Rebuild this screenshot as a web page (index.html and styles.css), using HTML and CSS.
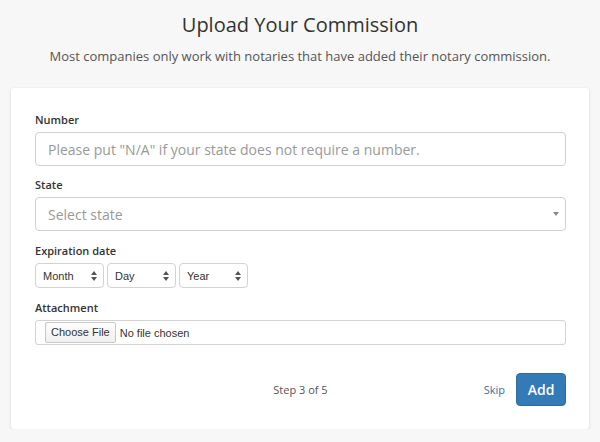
FILE: index.html
```html
<!DOCTYPE html>
<html lang="en">
<head>
    <meta charset="UTF-8">
    <meta name="viewport" content="width=device-width, initial-scale=1.0">
    <link rel="stylesheet" href="styles.css">
    <title>Upload Your Commission</title>
</head>
<body>
    <header class="page-header">
        <h1>Upload Your Commission</h1>
        <p class="lead">Most companies only work with notaries that have added their notary commission.</p>
    </header>

    <form class="card">
        <div class="field">
            <label class="field-label">Number</label>
            <div class="text-input"><span class="placeholder">Please put "N/A" if your state does not require a number.</span></div>
        </div>

        <div class="field">
            <label class="field-label">State</label>
            <div class="text-input state-select">
                <span class="placeholder">Select state</span>
                <svg class="caret" width="6" height="4" viewBox="0 0 6 4"><path d="M0 0h6L3 4z" fill="#888"/></svg>
            </div>
        </div>

        <div class="field">
            <label class="field-label">Expiration date</label>
            <div class="date-row">
                <div class="mini-select">Month
                    <svg class="updown" width="6" height="10" viewBox="0 0 6 10"><path d="M0 4L3 0l3 4zM0 6h6l-3 4z" fill="#555"/></svg>
                </div>
                <div class="mini-select">Day
                    <svg class="updown" width="6" height="10" viewBox="0 0 6 10"><path d="M0 4L3 0l3 4zM0 6h6l-3 4z" fill="#555"/></svg>
                </div>
                <div class="mini-select">Year
                    <svg class="updown" width="6" height="10" viewBox="0 0 6 10"><path d="M0 4L3 0l3 4zM0 6h6l-3 4z" fill="#555"/></svg>
                </div>
            </div>
        </div>

        <div class="field">
            <label class="field-label">Attachment</label>
            <div class="file-input">
                <span class="file-btn">Choose File</span>
                <span class="file-name">No file chosen</span>
            </div>
        </div>

        <div class="card-footer">
            <span></span>
            <span class="step">Step 3 of 5</span>
            <div class="actions">
                <a href="#" class="skip">Skip</a>
                <button type="button" class="btn-add">Add</button>
            </div>
        </div>
    </form>
</body>
</html>
```

FILE: styles.css
```css
*, body{
    box-sizing: border-box;
    margin: 0;
}
body{
    font-family: 'Open Sans', 'Noto Sans', Arial, sans-serif;
    background: #f7f7f7;
    color: #333;
}

.page-header{
    text-align: center;
    padding-top: 13px;
}
h1{
    font-size: 20px;
    font-weight: 400;
    line-height: 24px;
    color: #333;
}
.lead{
    font-size: 13px;
    line-height: 18px;
    margin-top: 10px;
    color: #555;
}

.card{
    margin: 23px 11px 0;
    background: #fff;
    border-radius: 3px;
    box-shadow: 0 1px 3px rgba(0,0,0,0.16);
    padding: 24px 23px 23px 24px;
}

.field{
    margin-bottom: 12px;
}
.field:first-child{
    margin-bottom: 11px;
}
.field-label{
    display: block;
    font-size: 11px;
    font-weight: 600;
    line-height: 16px;
    margin-bottom: 4px;
    color: #333;
}

.text-input{
    display: flex;
    align-items: center;
    height: 34px;
    border: 1px solid #d0d0d0;
    border-radius: 4px;
    padding: 0 12px;
}
.placeholder{
    font-size: 14px;
    color: #999;
}
.state-select{
    justify-content: space-between;
    padding-right: 6px;
}

.date-row{
    display: flex;
    gap: 3px;
}
.mini-select{
    display: flex;
    align-items: center;
    justify-content: space-between;
    width: 69px;
    height: 25px;
    padding: 0 6px 0 7px;
    border: 1px solid #d3d3d3;
    border-radius: 4px;
    font-family: 'Liberation Sans', Arial, sans-serif;
    font-size: 11px;
    color: #333;
}

.file-input{
    display: flex;
    align-items: center;
    height: 25px;
    border: 1px solid #d3d3d3;
    border-radius: 3px;
    padding: 0 9px;
    font-family: 'Liberation Sans', Arial, sans-serif;
    font-size: 11px;
    color: #333;
}
.file-btn{
    padding: 3px 5px;
    border: 1px solid #c9c9c9;
    border-radius: 2px;
    background: linear-gradient(#fdfdfd, #f0f0f0);
    line-height: 13px;
    margin-right: 4px;
}

.card-footer{
    display: grid;
    grid-template-columns: 1fr auto 1fr;
    align-items: center;
    margin-top: 28px;
}
.step{
    font-size: 11px;
    color: #555;
}
.actions{
    display: flex;
    align-items: center;
    justify-content: flex-end;
    gap: 11px;
}
.skip{
    font-size: 11px;
    color: #3a6ea8;
    text-decoration: none;
}
.btn-add{
    width: 50px;
    height: 33px;
    border: 1px solid #2e6da4;
    border-radius: 4px;
    background: #337ab7;
    color: #fff;
    font-family: 'Open Sans', 'Noto Sans', Arial, sans-serif;
    font-size: 14px;
    font-weight: 600;
}
```
